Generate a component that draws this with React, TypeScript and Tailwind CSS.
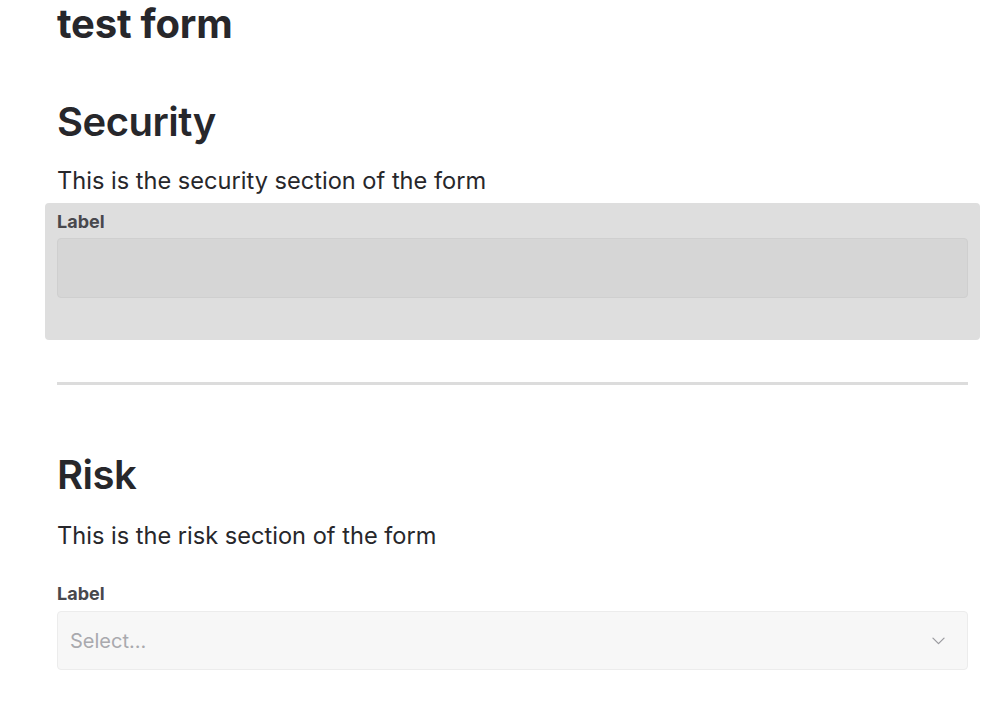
import React from 'react';

// Simple chevron for the select
function ChevronDown() {
  return (
    <svg width="19" height="19" viewBox="0 0 24 24" fill="none" stroke="#9a9a9f" strokeWidth="1.6" strokeLinecap="round" strokeLinejoin="round">
      <path d="M5 9l7 7 7-7" />
    </svg>
  );
}

export default function App() {
  return (
    <div className="min-h-screen bg-white text-[#27272b]" style={{ fontFamily: 'Inter, "Noto Sans", sans-serif' }}>
      <div className="ml-[45px] w-[935px]">
        <h1 className="px-3 text-[40px] font-bold leading-[48px] tracking-[-0.2px]">test form</h1>

        {/* Security */}
        <section className="mt-[50px]">
          <h2 className="px-3 text-[40px] font-semibold leading-[48px] tracking-[-0.5px]">Security</h2>
          <p className="mt-[19px] px-3 text-[23.6px] leading-[32px]">This is the security section of the form</p>
          <div className="mt-[6px] rounded-[4px] bg-[#dedede] px-3 pt-[7px] pb-[42px]">
            <label className="block text-[18px] font-bold leading-[24px] text-[#48484d]">Label</label>
            <div className="mt-[4px] h-[60px] rounded-[4px] border border-[#cfcfcf] bg-[#d6d6d6]" />
          </div>
        </section>

        <div className="mx-3 mt-[42px] h-[3px] bg-[#dcdcdc]" />

        {/* Risk */}
        <section className="mt-[66px]">
          <h2 className="px-3 text-[40px] font-semibold leading-[48px] tracking-[-0.5px]">Risk</h2>
          <p className="mt-[21px] px-3 text-[23.6px] leading-[32px]">This is the risk section of the form</p>
          <div className="mt-[30px] px-3">
            <label className="block text-[18px] font-bold leading-[24px] text-[#48484d]">Label</label>
            <div className="mt-[5px] flex h-[59px] items-center justify-between rounded-[4px] border border-[#ececec] bg-[#f7f7f7] pl-[12px] pr-[19px]">
              <span className="pt-[1px] text-[20px] text-[#a9a9ae]">Select...</span>
              <ChevronDown />
            </div>
          </div>
        </section>
      </div>
    </div>
  );
}
